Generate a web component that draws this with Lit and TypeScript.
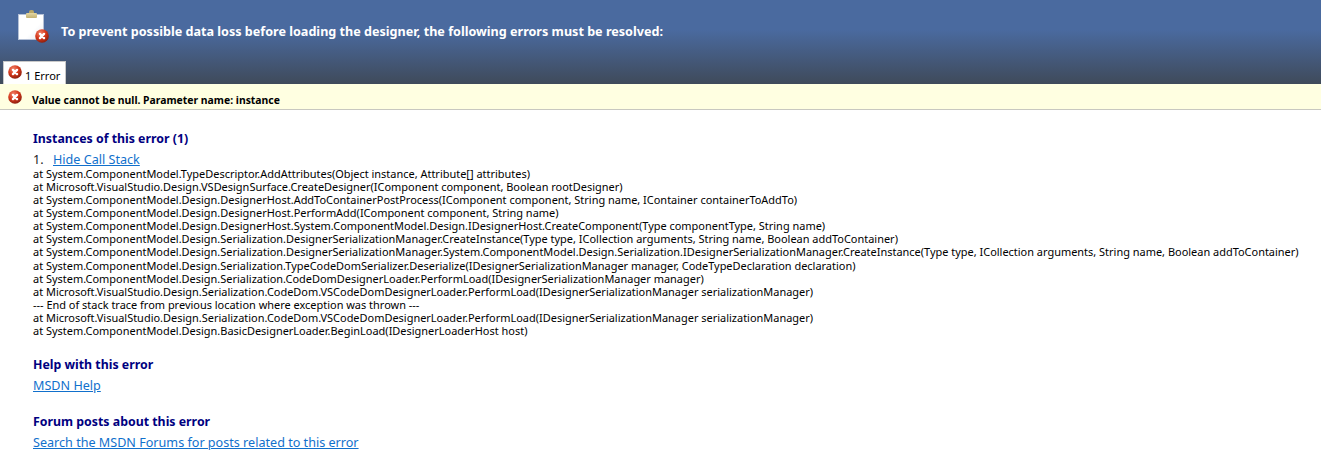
import { LitElement, html, css, svg } from 'lit'
import { customElement } from 'lit/decorators.js'

const STACK = [
  'at System.ComponentModel.TypeDescriptor.AddAttributes(Object instance, Attribute[] attributes)',
  'at Microsoft.VisualStudio.Design.VSDesignSurface.CreateDesigner(IComponent component, Boolean rootDesigner)',
  'at System.ComponentModel.Design.DesignerHost.AddToContainerPostProcess(IComponent component, String name, IContainer containerToAddTo)',
  'at System.ComponentModel.Design.DesignerHost.PerformAdd(IComponent component, String name)',
  'at System.ComponentModel.Design.DesignerHost.System.ComponentModel.Design.IDesignerHost.CreateComponent(Type componentType, String name)',
  'at System.ComponentModel.Design.Serialization.DesignerSerializationManager.CreateInstance(Type type, ICollection arguments, String name, Boolean addToContainer)',
  'at System.ComponentModel.Design.Serialization.DesignerSerializationManager.System.ComponentModel.Design.Serialization.IDesignerSerializationManager.CreateInstance(Type type, ICollection arguments, String name, Boolean addToContainer)',
  'at System.ComponentModel.Design.Serialization.TypeCodeDomSerializer.Deserialize(IDesignerSerializationManager manager, CodeTypeDeclaration declaration)',
  'at System.ComponentModel.Design.Serialization.CodeDomDesignerLoader.PerformLoad(IDesignerSerializationManager manager)',
  'at Microsoft.VisualStudio.Design.Serialization.CodeDom.VSCodeDomDesignerLoader.PerformLoad(IDesignerSerializationManager serializationManager)',
  '--- End of stack trace from previous location where exception was thrown ---',
  'at Microsoft.VisualStudio.Design.Serialization.CodeDom.VSCodeDomDesignerLoader.PerformLoad(IDesignerSerializationManager serializationManager)',
  'at System.ComponentModel.Design.BasicDesignerLoader.BeginLoad(IDesignerLoaderHost host)',
]

const errorIcon = (size: number) => html`
  <svg width=${size} height=${size} viewBox="0 0 16 16" class="err">
    <defs>
      <radialGradient id="ball" cx="38%" cy="28%" r="80%">
        <stop offset="0" stop-color="#f0836a" />
        <stop offset="0.5" stop-color="#d5381b" />
        <stop offset="1" stop-color="#7f1a0b" />
      </radialGradient>
    </defs>
    ${svg`<circle cx="8" cy="8" r="7.8" fill="url(#ball)" />
    <path d="M5.7 5.7l4.6 4.6M10.3 5.7l-4.6 4.6" stroke="#fff" stroke-width="2.8" stroke-linecap="round" />`}
  </svg>
`

@customElement('app-root')
export class AppRoot extends LitElement {
  static styles = css`
    :host {
      display: block;
      font-family: 'Noto Sans', 'DejaVu Sans', sans-serif;
      font-size: 12.6px;
      color: #000;
      background: #fff;
      height: 460px;
      overflow: hidden;
    }

    .banner {
      height: 84px;
      box-sizing: border-box;
      background: linear-gradient(#4a6a9f 0, #4a6a9f 30px, #3f4a5a 84px);
      display: flex;
      flex-direction: column;
    }

    .banner__top {
      display: flex;
      align-items: center;
      height: 61px;
      padding-left: 18px;
    }

    .clipboard {
      position: relative;
      align-self: flex-start;
      width: 32px;
      height: 33px;
      margin-top: 10px;
      margin-right: 11px;
    }

    .clipboard__page {
      position: absolute;
      left: 0;
      top: 4px;
      width: 26px;
      height: 26px;
      box-sizing: border-box;
      background: linear-gradient(135deg, #fff 60%, #e8ecf4);
      border: 1px solid #b5c1d6;
    }

    .clipboard__clip {
      position: absolute;
      left: 8px;
      top: 3px;
      width: 11px;
      height: 5px;
      background: linear-gradient(#e3d6a2, #c4b272);
      border-radius: 1px;
    }

    .clipboard__clip::before {
      content: '';
      position: absolute;
      left: 3px;
      top: -3px;
      width: 5px;
      height: 3px;
      background: #b9a768;
      border-radius: 2px 2px 0 0;
    }

    .clipboard .err {
      position: absolute;
      left: 17px;
      top: 19px;
    }

    .banner__title {
      color: #fff;
      font-weight: 700;
      font-size: 12.6px;
      margin-top: 1px;
    }

    .tabs {
      padding-left: 3px;
      display: flex;
    }

    .tab {
      height: 23px;
      width: 63px;
      box-sizing: border-box;
      background: #fff;
      border: 1px solid #c9c9c9;
      border-bottom: 0;
      display: flex;
      align-items: flex-start;
      padding: 3px 0 0 4px;
      gap: 3px;
      font-size: 11px;
      line-height: 15px;
    }

    .tab span {
      margin-top: 3px;
    }

    .summary {
      height: 26px;
      box-sizing: border-box;
      background: #ffffe1;
      border-bottom: 1px solid #c8c8c0;
      display: flex;
      align-items: center;
      padding-left: 8px;
      font-weight: 700;
      font-size: 10.4px;
    }

    .summary .err {
      margin-right: 10px;
    }

    .summary span {
      margin-top: 6px;
    }

    .content {
      padding: 21px 0 0 33px;
    }

    h2 {
      margin: 0;
      font-size: 12.35px;
      line-height: 16px;
      font-weight: 700;
      color: #000080;
    }

    a {
      color: #1170cc;
      text-decoration: underline;
    }

    .call {
      margin-top: 5px;
      line-height: 16px;
      display: flex;
    }

    .call__num {
      width: 20px;
      color: #222;
    }

    .stack {
      font-size: 10.96px;
      line-height: 13.08px;
      white-space: nowrap;
      margin-top: -1px;
    }

    .section {
      margin-top: 20px;
    }

    .section a {
      display: block;
      margin-top: 5px;
      line-height: 16px;
    }
  `

  render() {
    return html`
      <div class="banner">
        <div class="banner__top">
          <div class="clipboard">
            <div class="clipboard__page"></div>
            <div class="clipboard__clip"></div>
            ${errorIcon(14)}
          </div>
          <div class="banner__title">
            To prevent possible data loss before loading the designer, the following errors must be resolved:
          </div>
        </div>
        <div class="tabs">
          <div class="tab">${errorIcon(14)}<span>1 Error</span></div>
        </div>
      </div>
      <div class="summary">${errorIcon(14)}<span>Value cannot be null. Parameter name: instance</span></div>
      <div class="content">
        <h2>Instances of this error (1)</h2>
        <div class="call">
          <span class="call__num">1.</span>
          <a href="#">Hide Call Stack</a>
        </div>
        <div class="stack">${STACK.map((line) => html`<div>${line}</div>`)}</div>
        <div class="section">
          <h2>Help with this error</h2>
          <a href="#">MSDN Help</a>
        </div>
        <div class="section">
          <h2>Forum posts about this error</h2>
          <a href="#">Search the MSDN Forums for posts related to this error</a>
        </div>
      </div>
    `
  }
}
